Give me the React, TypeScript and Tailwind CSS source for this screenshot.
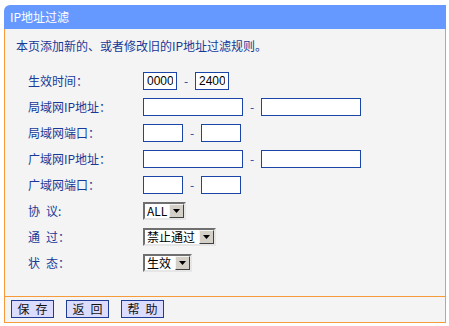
import React from "react";

// IP filter rule editor — classic router admin page look.

const FONT = { fontFamily: '"Noto Sans CJK SC", "Liberation Sans", sans-serif' };

function Box({ className, value }: { className: string; value?: string }) {
  return (
    <input
      readOnly
      value={value ?? ""}
      className={`h-[18px] border border-[#1c45a8] bg-white px-[3px] text-[12px] leading-[16px] text-black outline-none ${className}`}
      style={{ fontFamily: '"Liberation Sans", sans-serif' }}
    />
  );
}

function Dash() {
  return <span className="w-[18px] text-center text-[12px] text-[#1b3f9e]">-</span>;
}

function Select({ className, value }: { className: string; value: string }) {
  return (
    <div
      className={`flex h-[18px] items-stretch border-2 border-t-[#6f6f6f] border-l-[#6f6f6f] border-b-[#e6e6e6] border-r-[#e6e6e6] bg-white ${className}`}
    >
      <span className="flex-1 pl-[2px] text-[12px] leading-[14px] text-black">{value}</span>
      <span className="flex w-[15px] items-center justify-center border border-t-[#f4f4f4] border-l-[#f4f4f4] border-b-[#404040] border-r-[#404040] bg-[#d4d0c8]">
        <svg width="7" height="4" viewBox="0 0 7 4" aria-hidden="true">
          <path d="M0 0h7L3.5 4z" fill="#000" />
        </svg>
      </span>
    </div>
  );
}

function Row({ label, children }: { label: string; children: React.ReactNode }) {
  return (
    <div className="flex h-[26px] items-center">
      <div className="w-[138px] shrink-0 pl-[23px] text-[12px] text-[#173a98]">{label}</div>
      <div className="flex items-center">{children}</div>
    </div>
  );
}

function Btn({ children }: { children: React.ReactNode }) {
  return (
    <button className="h-[18px] w-[43px] border border-[#1e3c96] bg-[#dcdcff] text-[12px] leading-[16px] text-[#111]">
      {children}
    </button>
  );
}

export default function App() {
  return (
    <div className="h-[326px] w-[449px] bg-white pt-[5px] pl-[4px]" style={FONT}>
      <div className="w-[442px]">
        <div className="flex h-[24px] items-center rounded-tl-[6px] bg-[#6699ff] pl-[6px] text-[12px] text-white">
          IP地址过滤
        </div>
        <div className="border-x border-b border-[#f79a3a] bg-[#f4f4f4] pt-[9px] pb-[20px]">
          <div className="h-[16px] pl-[11px] text-[12px] leading-[16px] text-[#173a98]">
            本页添加新的、或者修改旧的IP地址过滤规则。
          </div>
          <div className="mt-[14px]">
            <Row label="生效时间：">
              <Box className="w-[34px]" value="0000" />
              <Dash />
              <Box className="w-[34px]" value="2400" />
            </Row>
            <Row label="局域网IP地址：">
              <Box className="w-[100px]" />
              <Dash />
              <Box className="w-[100px]" />
            </Row>
            <Row label="局域网端口：">
              <Box className="w-[40px]" />
              <Dash />
              <Box className="w-[40px]" />
            </Row>
            <Row label="广域网IP地址：">
              <Box className="w-[100px]" />
              <Dash />
              <Box className="w-[100px]" />
            </Row>
            <Row label="广域网端口：">
              <Box className="w-[40px]" />
              <Dash />
              <Box className="w-[40px]" />
            </Row>
            <Row label={"协\u2002议:"}>
              <Select className="w-[43px]" value="ALL" />
            </Row>
            <Row label={"通\u2002过："}>
              <Select className="w-[73px]" value="禁止通过" />
            </Row>
            <Row label={"状\u2002态："}>
              <Select className="w-[49px]" value="生效" />
            </Row>
          </div>
        </div>
        <div className="flex h-[26px] gap-[12px] border-x border-b border-[#f79a3a] bg-[#f4f4f4] pt-[3px] pl-[6px]">
          <Btn>{"保\u2002存"}</Btn>
          <Btn>{"返\u2002回"}</Btn>
          <Btn>{"帮\u2002助"}</Btn>
        </div>
      </div>
    </div>
  );
}
